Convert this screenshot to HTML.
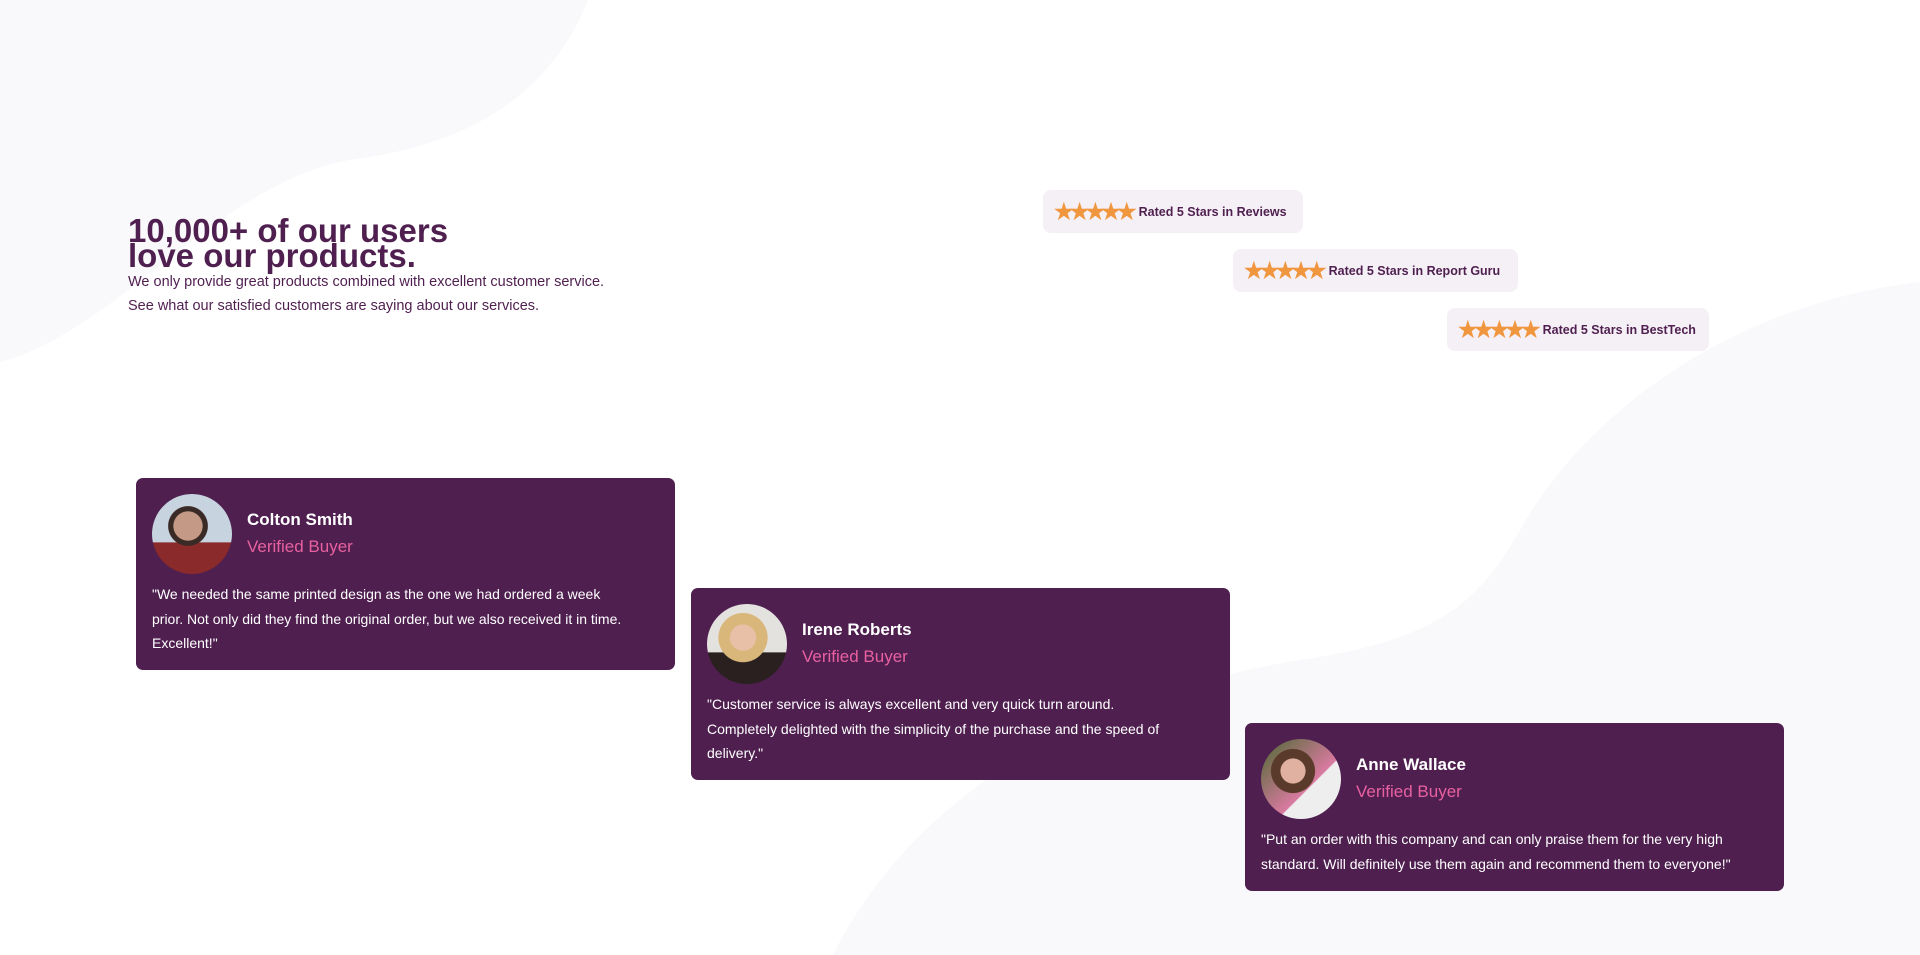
<!DOCTYPE html>
<html><head><meta charset="utf-8"><style>
*{margin:0;padding:0;box-sizing:border-box}
body{width:1920px;height:955px;overflow:hidden;background:#fff;font-family:"Liberation Sans",sans-serif;position:relative;color:#4a1c4b}
svg.bg{position:absolute;left:0;top:0}
h1{position:absolute;left:128px;top:218px;font-size:33px;line-height:25px;font-weight:bold;color:#4f1f50;letter-spacing:0}
.sub{position:absolute;left:128px;top:270px;font-size:14.5px;line-height:24px;color:#4f1f50}
.badge{position:absolute;background:#f5f0f6;border-radius:8px;height:43px;display:flex;align-items:center;padding-left:11px;font-size:12.5px;font-weight:bold;color:#4f1f50}
.stars{color:#f0963f;font-size:22px;letter-spacing:-4px;margin-right:6px;line-height:1}
.card{position:absolute;width:539px;background:#4f1f50;border-radius:7px;color:#fff;padding:16px 16px}
.av{width:80px;height:80px;border-radius:50%;position:absolute;left:16px;top:16px}
.nm{position:absolute;left:111px;top:32px;font-weight:bold;font-size:17px}
.vb{position:absolute;left:111px;top:59px;font-size:17px;color:#e8609f}
.q{margin-top:88px;font-size:14px;line-height:24.5px;max-width:480px}
</style></head><body>
<svg class="bg" width="1920" height="955" viewBox="0 0 1920 955">
<path d="M0 0 L588 0 C560 70 500 140 355 159 C220 180 120 330 0 362 Z" fill="#f9f8fa"/>
<path d="M833 955 C900 820 1050 700 1300 660 C1440 640 1480 600 1520 530 C1600 390 1760 300 1920 282 L1920 955 Z" fill="#f9f8fa"/>
</svg>
<h1>10,000+ of our users<br>love our products.</h1>
<div class="sub">We only provide great products combined with excellent customer service.<br>See what our satisfied customers are saying about our services.</div>
<div class="badge" style="left:1043px;top:190px;width:260px"><span class="stars">★★★★★</span>Rated 5 Stars in Reviews</div>
<div class="badge" style="left:1233px;top:249px;width:285px"><span class="stars">★★★★★</span>Rated 5 Stars in Report Guru</div>
<div class="badge" style="left:1447px;top:308px;width:262px"><span class="stars">★★★★★</span>Rated 5 Stars in BestTech</div>
<div class="card" style="left:136px;top:478px;height:192px">
<div class="av" style="background:radial-gradient(circle at 45% 40%,#c49a86 0 22%,#3a2a25 23% 30%,transparent 31%),linear-gradient(#c7d4e0 60%,#8a2a2a 61%)"></div>
<div class="nm">Colton Smith</div><div class="vb">Verified Buyer</div>
<div class="q">"We needed the same printed design as the one we had ordered a week prior. Not only did they find the original order, but we also received it in time. Excellent!"</div></div>
<div class="card" style="left:691px;top:588px;height:192px">
<div class="av" style="background:radial-gradient(circle at 45% 42%,#e8c0a8 0 20%,#d9b77a 21% 38%,transparent 39%),linear-gradient(#e4e2df 60%,#2a2020 61%)"></div>
<div class="nm">Irene Roberts</div><div class="vb">Verified Buyer</div>
<div class="q">"Customer service is always excellent and very quick turn around. Completely delighted with the simplicity of the purchase and the speed of delivery."</div></div>
<div class="card" style="left:1245px;top:723px;height:168px">
<div class="av" style="background:radial-gradient(circle at 40% 40%,#e0b0a0 0 18%,#5a3a2a 19% 32%,transparent 33%),linear-gradient(135deg,#4a6a30,#d97aa0 60%,#eee 61%)"></div>
<div class="nm">Anne Wallace</div><div class="vb">Verified Buyer</div>
<div class="q" style="max-width:510px">"Put an order with this company and can only praise them for the very high standard. Will definitely use them again and recommend them to everyone!"</div></div>
</body></html>
